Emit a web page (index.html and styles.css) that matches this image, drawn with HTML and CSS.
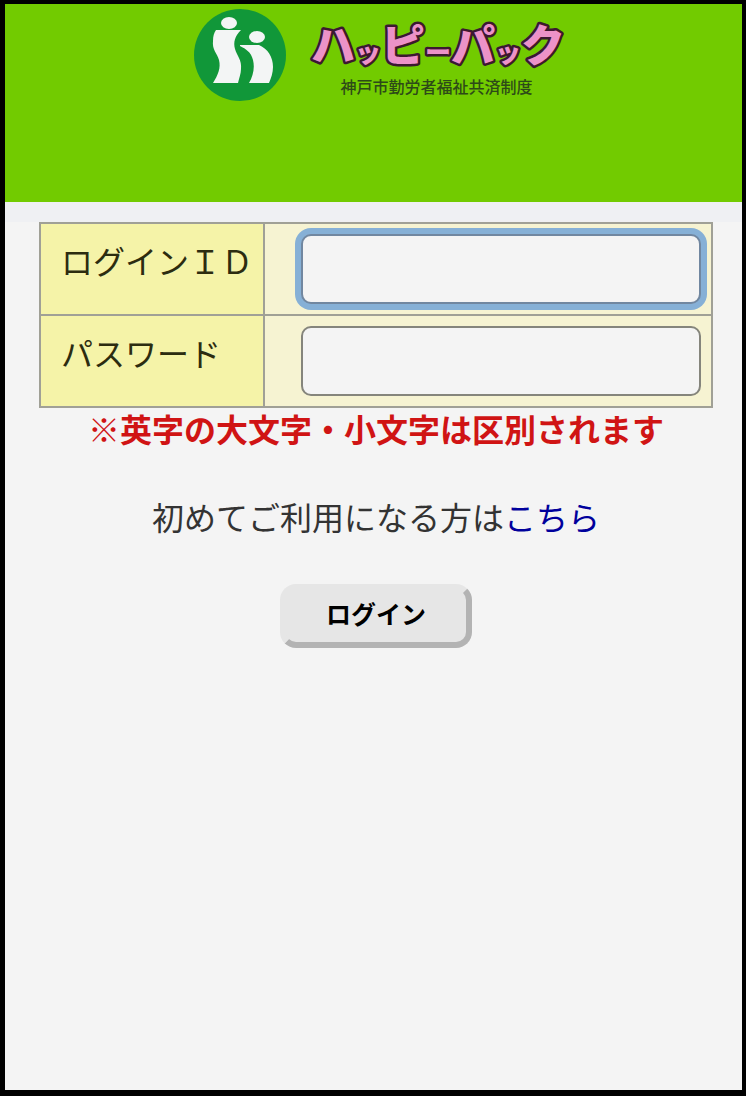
FILE: index.html
```html
<!DOCTYPE html>
<html lang="ja">
<head>
    <meta charset="UTF-8">
    <meta name="viewport" content="width=device-width, initial-scale=1.0">
    <title>ログイン</title>
    <link rel="stylesheet" href="styles.css">
</head>
<body>
    <header class="header">
        <svg class="emblem" width="94" height="94" viewBox="0 0 94 94" aria-hidden="true">
            <circle cx="47" cy="47" r="46" fill="#119739"/>
            <ellipse cx="36" cy="15" rx="8" ry="6" fill="#f3f5f5"/>
            <path d="M23 22H48C42 28 40 34 42 41C44 48 49 52 48 61C48 66 46 70 45 75H20C25 67 28 60 26 52C24 45 19 42 20 33C20 28 21 25 23 22Z" fill="#f3f5f5"/>
            <ellipse cx="64" cy="29" rx="8" ry="6" fill="#f3f5f5"/>
            <path d="M47 37H66C75 41 80 49 80 59C80 65 78 70 76 75H56C60 68 62 60 60 52C58 44 53 41 47 38Z" fill="#f3f5f5"/>
        </svg>
        <div class="brand">
            <svg class="wordmark" width="252" height="66" viewBox="0 0 252 66">
                <text x="0" y="54"><tspan class="large">ハ</tspan><tspan class="small">ッ</tspan><tspan class="large">ピ</tspan><tspan class="small">ー</tspan><tspan class="large">パ</tspan><tspan class="small">ッ</tspan><tspan class="large">ク</tspan></text>
            </svg>
            <p class="subtitle">神戸市勤労者福祉共済制度</p>
        </div>
    </header>
    <main>
        <form class="login-form">
            <table class="login-table">
                <tr>
                    <th><label for="login-id">ログインＩＤ</label></th>
                    <td><input class="active" type="text" id="login-id"></td>
                </tr>
                <tr>
                    <th><label for="password">パスワード</label></th>
                    <td><input type="password" id="password"></td>
                </tr>
            </table>
            <p class="notice">※英字の大文字・小文字は区別されます</p>
            <p class="first-time">初めてご利用になる方は<a href="#">こちら</a></p>
            <button type="submit" class="login-button">ログイン</button>
        </form>
    </main>
</body>
</html>
```
FILE: styles.css
```css
* {
    margin: 0;
    padding: 0;
    box-sizing: border-box;
}

body {
    min-height: 100vh;
    border: solid #000;
    border-width: 4px 4px 6px 5px;
    background: #f4f4f4;
    color: #333;
    font-family: "Noto Sans CJK JP", sans-serif;
    font-size: 32px;
    line-height: 40px;
}

/* Header */
.header {
    display: flex;
    justify-content: center;
    gap: 24px;
    height: 198px;
    padding: 4px 0 0 8px;
    background: #72cb00;
}

.brand {
    text-align: center;
}

.wordmark {
    display: block;
    overflow: visible;
    font-weight: 900;
    fill: #ec92c8;
    stroke: #3c1830;
    stroke-width: 5px;
    stroke-linejoin: round;
    paint-order: stroke;
}

.wordmark .large {
    font-size: 44px;
}

.wordmark .small {
    font-size: 26px;
}

.subtitle {
    color: #2d4a18;
    font-size: 16px;
    font-weight: 500;
    line-height: 24px;
}

/* Login form */
.login-form {
    padding: 0 29px 0 34px;
    border-top: 20px solid #eff0f3;
    text-align: center;
}

.login-table {
    width: 100%;
    border-collapse: collapse;
}

.login-table th,
.login-table td {
    border: 2px solid #a0a096;
}

.login-table th {
    width: 224px;
    padding: 16px 8px 0 20px;
    background: #f5f3a8;
    color: #2c2c10;
    font-weight: 400;
    text-align: left;
    vertical-align: top;
    white-space: nowrap;
}

.login-table td {
    padding: 10px 10px 10px 36px;
    background: #f6f3d2;
}

.login-table input {
    display: block;
    width: 100%;
    height: 70px;
    padding: 0 12px;
    border: 2px solid #85857c;
    border-radius: 10px;
    background: #f4f4f4;
    font: inherit;
    outline: none;
}

.login-table input.active,
.login-table input:focus {
    border-color: #7187a0;
    box-shadow: 0 0 0 6px #86b0d6;
}

.notice {
    color: #d01414;
    font-weight: 700;
}

.first-time {
    margin: 48px 0;
}

.first-time a {
    color: #00009c;
    text-decoration: none;
}

.login-button {
    width: 192px;
    height: 64px;
    padding-bottom: 6px;
    border: 6px solid #e6e6e6;
    border-right-color: #b3b3b3;
    border-bottom-color: #b3b3b3;
    border-radius: 16px;
    background: #e6e6e6;
    color: #000;
    font-family: inherit;
    font-size: 25px;
    font-weight: 700;
    line-height: 40px;
    cursor: pointer;
}
```
